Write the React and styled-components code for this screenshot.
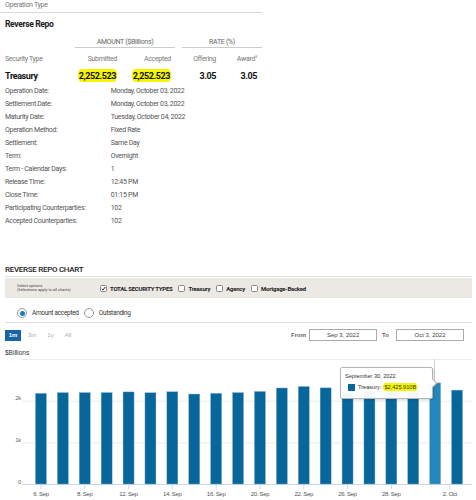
import React from "react";
import styled, { createGlobalStyle } from "styled-components";

const narrow = `Roboto, "Liberation Sans", sans-serif`;
const chartFont = `"Liberation Sans", Arial, sans-serif`;

const GlobalStyle = createGlobalStyle`
  html, body {
    margin: 0;
    padding: 0;
    background: #fff;
  }
  body {
    font-family: ${narrow};
    letter-spacing: -0.3px;
    color: #333;
  }
`;

const Page = styled.div`
  width: 476px;
  height: 500px;
  overflow: hidden;
`;

/* ---------- operation summary ---------- */

const Summary = styled.div`
  width: 262px;
`;

const OpType = styled.div`
  height: 12px;
  line-height: 11px;
  padding-left: 5px;
  font-size: 7px;
  color: #777;
  border-bottom: 1px solid #d6d6d6;
`;

const Heading = styled.div`
  margin-top: 5px;
  padding-left: 5px;
  line-height: 12px;
  font-size: 8.6px;
  font-weight: bold;
  letter-spacing: -0.4px;
  color: #222;
`;

const Grid = styled.div`
  display: grid;
  grid-template-columns: 70px 45px 55px 44px 43px;
  padding-left: 5px;
  align-items: center;
`;

const GroupHead = styled.div`
  grid-column: ${(p) => p.$span};
  margin-left: ${(p) => p.$inset || 0}px;
  text-align: center;
  font-size: 7px;
  line-height: 10px;
  color: #666;
  border-bottom: 1px solid #ccc;
`;

const GroupRow = styled(Grid)`
  margin-top: 7px;
`;

const HeadRow = styled(Grid)`
  margin-top: 5px;
  height: 12px;
  font-size: 7px;
  color: #777;
`;

const Cell = styled.div`
  text-align: ${(p) => (p.$left ? "left" : "right")};
  padding-right: ${(p) => p.$pr || 0}px;
  white-space: nowrap;
`;

const ValueRow = styled(Grid)`
  margin-top: 4px;
  height: 14px;
  font-size: 9px;
  font-weight: bold;
  letter-spacing: -0.4px;
  color: #111;
`;

const Marker = styled.span`
  background: #f6f600;
  border-radius: 3px / 6px;
  padding: 2px 1px 1px;
`;

const Details = styled.div`
  margin-top: 2px;
  padding-left: 5px;
`;

const DetailRow = styled.div`
  display: grid;
  grid-template-columns: 105.7px 1fr;
  height: 13px;
  line-height: 13px;
  font-size: 7px;
  color: #555;
`;

/* ---------- chart controls ---------- */

const ChartTitle = styled.div`
  margin: 35px 4px 0 5px;
  line-height: 13px;
  font-size: 8px;
  font-weight: 500;
  color: #222;
  border-bottom: 1px solid #ddd;
`;

const OptionsBar = styled.div`
  margin: 1px 4px 0 5px;
  height: 20px;
  background: #ece9e4;
  display: flex;
  align-items: center;
  padding-left: 12px;
`;

const OptionsNote = styled.div`
  width: 83px;
  font-size: 4px;
  line-height: 4.5px;
  letter-spacing: 0;
  color: #444;
`;

const Check = styled.label`
  display: flex;
  align-items: center;
  gap: 3px;
  margin-right: 6px;
  font-size: 6px;
  letter-spacing: -0.25px;
  font-weight: ${(p) => (p.$strong ? "bold" : "normal")};
  color: #222;
`;

const Box = styled.span`
  width: 7px;
  height: 7px;
  box-sizing: border-box;
  border: 1px solid #888;
  border-radius: 1.5px;
  background: #fff;
  display: flex;
  align-items: center;
  justify-content: center;
`;

const RadioRow = styled.div`
  margin: 0 4px 0 5px;
  padding: 10px 0 4px 12px;
  display: flex;
  align-items: center;
  height: 10px;
  border-bottom: 1px solid #ddd;
  font-size: 6.5px;
  color: #333;
`;

const Radio = styled.span`
  width: 10px;
  height: 10px;
  box-sizing: border-box;
  border-radius: 50%;
  border: 1px solid #999;
  background: #fff;
  display: flex;
  align-items: center;
  justify-content: center;
  margin-right: 5px;

  &::after {
    content: "";
    width: 5px;
    height: 5px;
    border-radius: 50%;
    background: ${(p) => (p.$on ? "#1b7dc0" : "transparent")};
  }
`;

const RadioText = styled.span`
  margin-right: 5px;
`;

const RangeRow = styled.div`
  margin: 6px 4px 0 5px;
  height: 12px;
  display: flex;
  align-items: center;
  font-family: ${chartFont};
  font-size: 6px;
  letter-spacing: 0;
`;

const RangeButton = styled.span`
  width: ${(p) => (p.$on ? "16px" : "auto")};
  height: 11px;
  margin-right: ${(p) => (p.$on ? "7px" : "11px")};
  display: flex;
  align-items: center;
  justify-content: center;
  background: ${(p) => (p.$on ? "#1763a6" : "transparent")};
  color: ${(p) => (p.$on ? "#fff" : "#aaa")};
  font-weight: ${(p) => (p.$on ? "bold" : "normal")};
`;

const Spacer = styled.div`
  flex: 1;
`;

const DateLabel = styled.span`
  color: #666;
  font-weight: bold;
  margin-right: ${(p) => p.$mr}px;
`;

const DateInput = styled.span`
  width: 68px;
  height: 12px;
  box-sizing: border-box;
  border: 1px solid #aaa;
  display: flex;
  align-items: center;
  justify-content: center;
  color: #444;
  margin-right: ${(p) => p.$mr}px;
`;

const Units = styled.div`
  margin-top: 7px;
  padding-left: 5px;
  line-height: 9px;
  font-family: ${chartFont};
  font-size: 6.5px;
  letter-spacing: 0;
  color: #333;
`;

/* ---------- chart ---------- */

const ChartWrap = styled.div`
  position: relative;
  height: 143px;
`;

const Tooltip = styled.div`
  position: absolute;
  left: 340px;
  top: 10px;
  width: 93px;
  height: 32px;
  box-sizing: border-box;
  padding: 5px 0 0 4px;
  background: rgba(255, 255, 255, 0.95);
  border: 1px solid #b5b5b5;
  border-radius: 2px;
  box-shadow: 1px 1px 2px rgba(0, 0, 0, 0.15);
  font-family: ${chartFont};
  font-size: 5.6px;
  letter-spacing: 0;
  color: #333;

  &::after {
    content: "";
    position: absolute;
    right: -4px;
    top: 12px;
    width: 5px;
    height: 5px;
    background: #fff;
    border-top: 1px solid #b5b5b5;
    border-right: 1px solid #b5b5b5;
    transform: rotate(45deg);
  }
`;

const TipLine = styled.div`
  display: flex;
  align-items: center;
  margin-top: ${(p) => p.$mt || 0}px;
  padding-left: ${(p) => p.$pl || 0}px;
`;

const Swatch = styled.span`
  width: 7px;
  height: 7px;
  background: #07679b;
  margin-right: 3px;
`;

const TipValue = styled.span`
  margin-left: 2px;
  background: #f6f600;
  border-radius: 3px / 5px;
  padding: 1px 1px;
`;

const details = [
  ["Operation Date:", "Monday, October 03, 2022"],
  ["Settlement Date:", "Monday, October 03, 2022"],
  ["Maturity Date:", "Tuesday, October 04, 2022"],
  ["Operation Method:", "Fixed Rate"],
  ["Settlement:", "Same Day"],
  ["Term:", "Overnight"],
  ["Term - Calendar Days:", "1"],
  ["Release Time:", "12:45 PM"],
  ["Close Time:", "01:15 PM"],
  ["Participating Counterparties:", "102"],
  ["Accepted Counterparties:", "102"],
];

// daily totals in $ billions, 6 Sep .. 3 Oct (business days)
const bars = [
  2175, 2193, 2194, 2194, 2210, 2190, 2213, 2159, 2176, 2193,
  2220, 2304, 2339, 2307, 2190, 2211, 2366, 2371, 2426, 2253,
];

const xLabels = [
  [0, "6. Sep"], [2, "8. Sep"], [4, "12. Sep"], [6, "14. Sep"], [8, "16. Sep"],
  [10, "20. Sep"], [12, "22. Sep"], [14, "26. Sep"], [16, "28. Sep"], [18.667, "2. Oct"],
];

const PLOT_LEFT = 30;
const PITCH = 21.9;
const BASE = 127;
const PER_K = 41.67;

function BarChart() {
  const yFor = (v) => BASE - (v / 1000) * PER_K;
  return (
    <svg width="476" height="143" style={{ display: "block" }}>
      {[0, 1, 2, 3].map((k) => (
        <line key={k} x1="22" x2="472" y1={yFor(k * 1000) + 0.5} y2={yFor(k * 1000) + 0.5}
          stroke={k === 0 ? "#ccd6eb" : "#ececec"} strokeWidth="1" />
      ))}
      {[["0", 0], ["1k", 1], ["2k", 2]].map(([t, k]) => (
        <text key={t} x="21" y={yFor(k * 1000) - 0.5} textAnchor="end" fontSize="6"
          fill="#666" fontFamily="Liberation Sans, Arial, sans-serif">{t}</text>
      ))}
      <line x1="434.5" x2="434.5" y1="2" y2="24" stroke="#cfcfcf" />
      {bars.map((v, i) => {
        const x = PLOT_LEFT + PITCH * i + 5.45;
        const y = yFor(v);
        return (
          <rect key={i} x={x} y={y} width="11" height={BASE - y}
            fill={i === 18 ? "#2387bd" : "#07679b"} stroke="#7fb0cd" strokeWidth="0.4" />
        );
      })}
      {xLabels.map(([i, t]) => {
        const cx = PLOT_LEFT + PITCH * i + PITCH / 2;
        return (
          <g key={t}>
            <line x1={cx} x2={cx} y1={BASE} y2={BASE + 5} stroke="#ccd6eb" />
            <text x={cx} y="139" textAnchor="middle" fontSize="6" fill="#555"
              fontFamily="Liberation Sans, Arial, sans-serif">{t}</text>
          </g>
        );
      })}
    </svg>
  );
}

const Tick = () => (
  <svg width="5" height="5" viewBox="0 0 10 10">
    <path d="M1.5 5.5 L4 8 L8.5 2" fill="none" stroke="#222" strokeWidth="2" />
  </svg>
);

export default function App() {
  return (
    <Page>
      <GlobalStyle />
      <Summary>
        <OpType>Operation Type</OpType>
        <Heading>Reverse Repo</Heading>
        <GroupRow>
          <GroupHead $span="2 / 4">AMOUNT ($Billions)</GroupHead>
          <GroupHead $span="4 / 6" $inset={7}>RATE (%)</GroupHead>
        </GroupRow>
        <HeadRow>
          <Cell $left>Security Type</Cell>
          <Cell $pr={3}>Submitted</Cell>
          <Cell $pr={4}>Accepted</Cell>
          <Cell $pr={3}>Offering</Cell>
          <Cell $pr={5}>Award<sup style={{ fontSize: "4px" }}>3</sup></Cell>
        </HeadRow>
        <ValueRow>
          <Cell $left>Treasury</Cell>
          <Cell $pr={3}><Marker>2,252.523</Marker></Cell>
          <Cell $pr={4}><Marker>2,252.523</Marker></Cell>
          <Cell $pr={3}>3.05</Cell>
          <Cell $pr={5}>3.05</Cell>
        </ValueRow>
        <Details>
          {details.map(([k, v]) => (
            <DetailRow key={k}>
              <span>{k}</span>
              <span>{v}</span>
            </DetailRow>
          ))}
        </Details>
      </Summary>

      <ChartTitle>REVERSE REPO CHART</ChartTitle>
      <OptionsBar>
        <OptionsNote>
          Select options
          <br />
          (Selections apply to all charts)
        </OptionsNote>
        <Check $strong><Box><Tick /></Box>TOTAL SECURITY TYPES</Check>
        <Check $strong><Box />Treasury</Check>
        <Check $strong><Box />Agency</Check>
        <Check $strong><Box />Mortgage-Backed</Check>
      </OptionsBar>
      <RadioRow>
        <Radio $on />
        <RadioText>Amount accepted</RadioText>
        <Radio />
        <RadioText>Outstanding</RadioText>
      </RadioRow>
      <RangeRow>
        <RangeButton $on>1m</RangeButton>
        <RangeButton>3m</RangeButton>
        <RangeButton>1y</RangeButton>
        <RangeButton>All</RangeButton>
        <Spacer />
        <DateLabel $mr={3}>From</DateLabel>
        <DateInput $mr={5}>Sep 3, 2022</DateInput>
        <DateLabel $mr={7}>To</DateLabel>
        <DateInput $mr={8}>Oct 3, 2022</DateInput>
      </RangeRow>
      <Units>$Billions</Units>
      <ChartWrap>
        <BarChart />
        <Tooltip>
          <div>September 30, 2022</div>
          <TipLine $mt={4} $pl={3}>
            <Swatch />
            Treasury:
            <TipValue>$2,425.910B</TipValue>
          </TipLine>
        </Tooltip>
      </ChartWrap>
    </Page>
  );
}
